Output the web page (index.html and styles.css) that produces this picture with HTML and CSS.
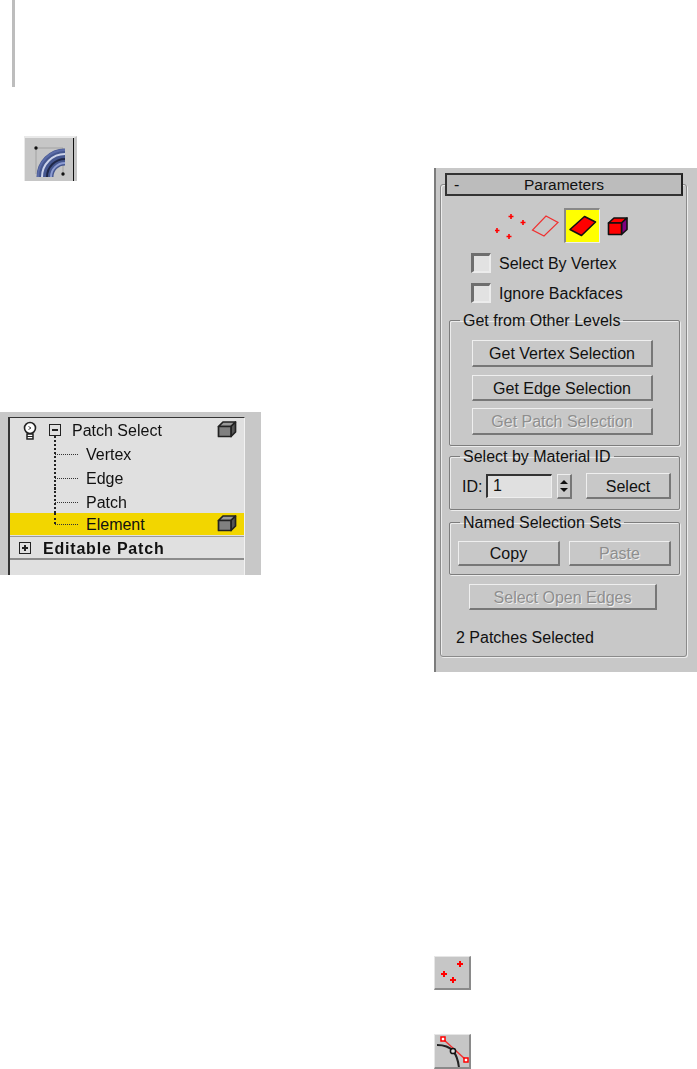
FILE: index.html
```html
<!DOCTYPE html>
<html lang="en">
<head>
<meta charset="utf-8">
<title>Patch Select</title>
<link rel="stylesheet" href="styles.css">
</head>
<body>
<main class="page">
  <section class="left">
    <div class="rule"></div>
    <div class="tool-button">
      <svg width="48" height="42" viewBox="0 0 48 42">
        <path class="thin" d="M9 9H36V35M9 9V35"/>
        <path d="M18 38A20 20 0 0 1 38 18" fill="none" stroke="#46578f" stroke-width="17"/>
        <path d="M11 38A27 27 0 0 1 38 11" fill="none" stroke="#5c6ca8" stroke-width="2"/>
        <path d="M15 38A23 23 0 0 1 38 15" fill="none" stroke="#ccd3ea" stroke-width="2"/>
        <path d="M20 38A18 18 0 0 1 38 20" fill="none" stroke="#1f2748" stroke-width="2"/>
        <path d="M24 38A14 14 0 0 1 38 24" fill="none" stroke="#8d9cd2" stroke-width="2"/>
        <circle cx="9" cy="9" r="1.700" fill="#111"/>
        <circle cx="36" cy="35" r="1.700" fill="#111"/>
      </svg>
    </div>
    <div class="stack">
      <div class="stack-inner">
        <div class="row head">
          <svg class="bulb" width="16" height="19" viewBox="0 0 16 19">
            <circle cx="8" cy="7" r="5.500" fill="#fff" stroke="#222" stroke-width="1.600"/>
            <path d="M6.500 5.500L9 7L6.500 8.500" fill="none" stroke="#444"/>
            <path d="M5 13H11V18H5Z" fill="#fff" stroke="#222" stroke-width="1.500"/>
            <path d="M5 15.500H11" stroke="#222"/>
          </svg>
          <span class="box minus"></span>
          <span class="head-label">Patch Select</span>
          <svg class="cube" width="20" height="18" viewBox="0 0 20 18"><use href="#gray-cube"/></svg>
        </div>
        <div class="row child">Vertex</div>
        <div class="row child">Edge</div>
        <div class="row child short">Patch</div>
        <div class="row child selected last">Element
          <svg class="cube" width="20" height="18" viewBox="0 0 20 18"><use href="#gray-cube"/></svg>
        </div>
        <div class="row modifier"><span class="box plus"></span><span class="mod-label">Editable Patch</span></div>
      </div>
    </div>
    <svg class="defs" width="0" height="0">
      <defs>
        <g id="gray-cube" stroke="#222" stroke-width="1.700" stroke-linejoin="round">
          <path d="M1.500 6.500L6 2H18.500L14 6.500Z" fill="#999"/>
          <path d="M14 6.500L18.500 2V12L14 16.500Z" fill="#555"/>
          <path d="M1.500 6.500H14V16.500H1.500Z" fill="#808080"/>
        </g>
      </defs>
    </svg>
  </section>

  <section class="right">
    <div class="panel">
      <div class="rollup"><span class="rollup-sign">-</span><span class="rollup-title">Parameters</span></div>
      <div class="frame">
        <div class="levels">
          <svg class="lv-vertex" width="36" height="26" viewBox="0 0 36 26">
            <path d="M16 1v5M13.500 3.500h5M28 7v5M25.500 9.500h5M2 15v5M-.5 17.500h5M14 21v5M11.500 23.500h5" stroke="#f00" stroke-width="1.600"/>
          </svg>
          <svg class="lv-edge" width="30" height="24" viewBox="0 0 30 24">
            <path d="M15 2L27 8.500L13 22L1.500 16Z" fill="none" stroke="#f03030" stroke-width="1.200"/>
          </svg>
          <div class="lv-active">
            <svg width="30" height="24" viewBox="0 0 30 24">
              <path d="M16.500 2.500L27.500 8L13.500 21.500L2 15.500Z" fill="#f00" stroke="#111" stroke-width="1.600" stroke-linejoin="round"/>
            </svg>
          </div>
          <svg class="lv-element" width="22" height="20" viewBox="0 0 22 20">
            <path d="M1.500 7L7 2H20L14.500 7Z" fill="#f00" stroke="#111" stroke-width="1.600" stroke-linejoin="round"/>
            <path d="M14.500 7L20 2V13.500L14.500 18.500Z" fill="#800080" stroke="#111" stroke-width="1.600" stroke-linejoin="round"/>
            <path d="M1.500 7H14.500V18.500H1.500Z" fill="#f00" stroke="#111" stroke-width="1.600" stroke-linejoin="round"/>
          </svg>
        </div>
        <div class="check"><span class="check-box"></span><span class="check-label">Select By Vertex</span></div>
        <div class="check"><span class="check-box"></span><span class="check-label">Ignore Backfaces</span></div>

        <fieldset class="group group-levels">
          <legend>Get from Other Levels</legend>
          <div class="levels-body">
            <button class="btn wide h27" type="button">Get Vertex Selection</button>
            <button class="btn wide h26 gap8" type="button">Get Edge Selection</button>
            <button class="btn wide h27 gap7" type="button" disabled>Get Patch Selection</button>
          </div>
        </fieldset>

        <fieldset class="group group-material">
          <legend>Select by Material ID</legend>
          <div class="id-row">
            <span class="id-label">ID:</span>
            <div class="spin-field">1</div>
            <div class="spinner"><span class="arrow up"></span><span class="arrow down"></span></div>
            <button class="btn select" type="button">Select</button>
          </div>
        </fieldset>

        <fieldset class="group group-named">
          <legend>Named Selection Sets</legend>
          <div class="named-row">
            <button class="btn half" type="button">Copy</button>
            <button class="btn half" type="button" disabled>Paste</button>
          </div>
        </fieldset>

        <button class="btn open-edges" type="button" disabled>Select Open Edges</button>
        <div class="status">2 Patches Selected</div>
      </div>
    </div>

    <div class="small-button first">
      <svg width="34" height="31" viewBox="0 0 34 31">
        <path d="M25 4v6M22 7h6M9 14v6M6 17h6M18 20v6M15 23h6" stroke="#f00" stroke-width="2"/>
      </svg>
    </div>
    <div class="small-button second">
      <svg width="34" height="32" viewBox="0 0 34 32">
        <path d="M2 10Q13 10 18 16T24 33" fill="none" stroke="#222" stroke-width="2"/>
        <path d="M8 4L31 25" stroke="#f03030" stroke-width="1.500"/>
        <rect x="6" y="2" width="4" height="4" fill="#fff" stroke="#f00" stroke-width="1.500"/>
        <rect x="29" y="23" width="4" height="4" fill="#fff" stroke="#f00" stroke-width="1.500"/>
        <circle cx="18" cy="16" r="2.600" fill="#ddd" stroke="#111" stroke-width="1.500"/>
      </svg>
    </div>
  </section>
</main>
</body>
</html>
```

FILE: styles.css
```css
* { box-sizing: border-box; }

html, body { margin: 0; padding: 0; background: #fff; }

body {
  font-family: "Liberation Sans", Arial, sans-serif;
  font-size: 16px;
  color: #111;
  overflow: hidden;
}

.page {
  display: flex;
  width: 697px;
  height: 1069px;
  overflow: hidden;
  filter: blur(0.35px);
}

/* left column */
.left { width: 434px; flex: none; }

.rule {
  width: 3px;
  height: 87px;
  margin-left: 12px;
  background: #bdbdbd;
}

.tool-button {
  width: 53px;
  height: 45px;
  margin: 49px 0 0 24px;
  padding: 1px 0 0 2px;
  background: #c6c6c6;
  border-top: 2px solid #e9e9e9;
  border-left: 1px solid #e9e9e9;
  border-right: 3px solid #c6c6c6;
  box-shadow: inset -1px 0 0 #111;
  overflow: hidden;
}

.thin { fill: none; stroke: #8a8a8a; stroke-width: .6; }

.stack {
  width: 261px;
  height: 163px;
  margin-top: 231px;
  padding: 5px 16px 0 8px;
  background: #c8c8c8;
}

.stack-inner {
  height: 158px;
  background: #e0e0e0;
  border-top: 1px solid #333;
  border-left: 2px solid #333;
  border-right: 1px solid #f2f2f2;
}

.row { position: relative; display: flex; align-items: center; }

.head { height: 24px; padding-left: 12px; }
.head-label { margin-left: 11px; padding-top: 2px; }

.bulb { flex: none; }

.box {
  position: relative;
  flex: none;
  width: 12px;
  height: 12px;
  margin-left: 11px;
  border: 1px solid #222;
}
.box::before {
  content: "";
  position: absolute;
  left: 2px; right: 2px; top: 4px;
  height: 2px;
  background: #222;
}
.plus::after {
  content: "";
  position: absolute;
  top: 2px; bottom: 2px; left: 4px;
  width: 2px;
  background: #222;
}

.cube { position: absolute; left: 207px; top: 2px; }

.child { height: 24px; padding: 2px 0 0 76px; }
.child.short { height: 23px; }
/* tree connectors: vertical trunk and horizontal branch */
.child::before {
  content: "";
  position: absolute;
  left: 44px;
  top: -6px;
  bottom: 0;
  border-left: 2px dotted #222;
}
.child.last::before { top: 0; bottom: 50%; }
.child::after {
  content: "";
  position: absolute;
  left: 45px;
  top: 50%;
  width: 23px;
  border-top: 1px dotted #333;
}
.selected {
  height: 22px;
  background: #f2d600;
}
.selected .cube { top: 1px; }

.modifier {
  height: 24px;
  padding-left: 9px;
  margin-top: 1px;
  border-top: 1px solid #9a9a9a;
  border-bottom: 2px solid #8c8c8c;
  font-weight: bold;
  letter-spacing: .8px;
}
.modifier .box { margin: 0 12px 0 0; }
.mod-label { padding-top: 2px; }

/* right column */
.right { width: 263px; flex: none; padding-top: 168px; }

.panel {
  height: 504px;
  padding-top: 5px;
  background: #c8c8c8;
  border-left: 2px solid #7c7c7c;
}

.rollup {
  position: relative;
  z-index: 1;
  display: flex;
  align-items: center;
  width: 238px;
  height: 23px;
  margin-left: 9px;
  background: #bcbcbc;
  border: 2px solid #333;
  border-right-color: #222;
}
.rollup-sign { width: 20px; padding-left: 7px; }
.rollup-title { flex: 1; text-align: center; padding-right: 20px; font-size: 15.5px; }

.frame {
  width: 247px;
  height: 473px;
  margin: -12px 0 0 4px;
  padding-top: 23px;
  border: 1px solid #8a8a8a;
  border-radius: 3px;
  box-shadow: inset 1px 1px 0 #ececec, 1px 1px 0 #ececec;
}

.levels { display: flex; align-items: center; height: 35px; margin-left: 51px; }
.lv-vertex { flex: none; margin-left: 3px; }
.lv-edge { flex: none; }
.lv-active {
  flex: none;
  display: flex;
  align-items: center;
  justify-content: center;
  width: 36px;
  height: 35px;
  margin-left: 3px;
  background: #ff0;
  border-top: 2px solid #888;
  border-left: 2px solid #888;
  border-right: 1px solid #eee;
  border-bottom: 1px solid #eee;
}
.lv-element { flex: none; margin-left: 7px; }

.check { display: flex; align-items: center; height: 20px; margin: 10px 0 0 30px; }
.check-box {
  width: 20px;
  height: 20px;
  margin-right: 8px;
  background: #e2e2e2;
  border-top: 3px solid #6e6e6e;
  border-left: 3px solid #6e6e6e;
  border-right: 2px solid #ececec;
  border-bottom: 2px solid #ececec;
}
.check-label { padding-top: 2px; }

.group {
  width: 231px;
  min-width: 0;
  margin: 0 0 0 8px;
  padding: 0;
  border: 1px solid #7d7d7d;
  border-radius: 2px;
  box-shadow: 1px 1px 0 #ececec, inset 1px 1px 0 #ececec;
}
.group legend {
  margin-left: 10px;
  padding: 0 3px;
  height: 16px;
  line-height: 18px;
}

.group-levels { margin-top: 9px; }
.levels-body { padding: 12px 0 10px 22px; }
.group-material { margin-top: 2px; }
.id-row { padding: 9px 0 10px 12px; }
.group-named { margin-top: 4px; }
.named-row { padding: 11px 0 8px 8px; }

.btn {
  display: block;
  margin: 0;
  padding: 2px 0 0;
  font: inherit;
  color: #111;
  background: #c8c8c8;
  border: 0;
  border-top: 1px solid #efefef;
  border-left: 1px solid #efefef;
  border-right: 2px solid #777;
  border-bottom: 2px solid #777;
}
.btn:disabled { color: #8e8e8e; text-shadow: 1px 1px 0 #eee; }

.wide { width: 181px; }
.h27 { height: 27px; }
.h26 { height: 26px; }
.gap8 { margin-top: 8px; }
.gap7 { margin-top: 7px; }

.id-row { display: flex; align-items: center; }
.id-label { width: 24px; flex: none; padding-top: 2px; }
.spin-field {
  width: 66px;
  height: 24px;
  padding-left: 5px;
  line-height: 20px;
  background: #e0e0e0;
  border-top: 2px solid #333;
  border-left: 2px solid #333;
  border-right: 1px solid #eee;
  border-bottom: 1px solid #eee;
}
.spinner {
  display: flex;
  flex-direction: column;
  align-items: center;
  justify-content: center;
  gap: 4px;
  width: 15px;
  height: 25px;
  margin-left: 5px;
  border-top: 1px solid #eee;
  border-left: 1px solid #eee;
  border-right: 2px solid #777;
  border-bottom: 2px solid #777;
}
.arrow { width: 0; height: 0; border: 4px solid transparent; border-top: 0; border-bottom: 4px solid #111; }
.arrow.down { border-bottom: 0; border-top: 4px solid #111; }
.select { width: 85px; height: 26px; margin-left: 14px; }

.named-row { display: flex; gap: 9px; }
.half { width: 102px; height: 25px; }

.open-edges { width: 188px; height: 26px; margin: 9px 0 0 28px; }
.status { margin: 19px 0 0 15px; height: 16px; line-height: 18px; }

.small-button {
  width: 37px;
  background: #c6c6c6;
  border-top: 1px solid #e6e6e6;
  border-left: 1px solid #e6e6e6;
  border-right: 2px solid #8a8a8a;
  border-bottom: 2px solid #8a8a8a;
}
.small-button svg { display: block; }
.first { height: 34px; margin-top: 284px; }
.second { height: 35px; margin-top: 44px; }

.defs { position: absolute; }
```
